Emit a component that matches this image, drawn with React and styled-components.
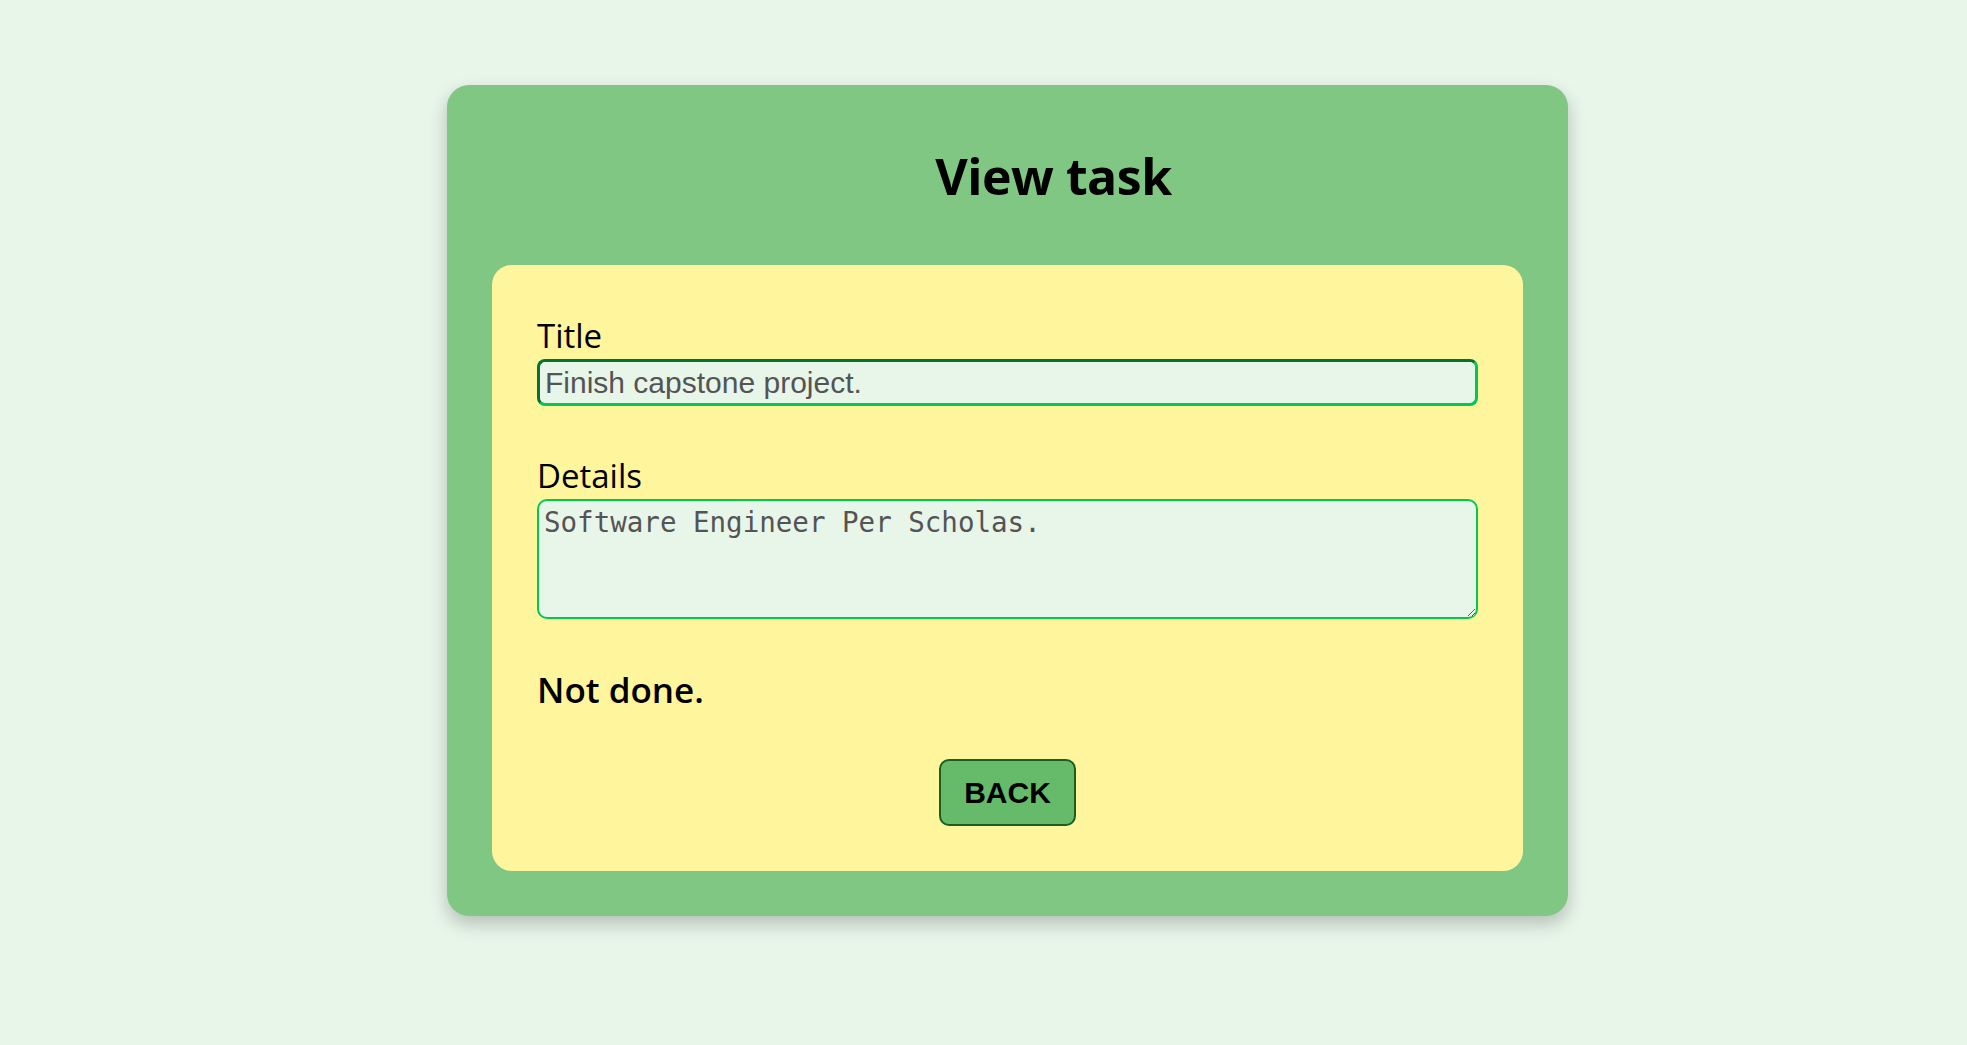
import styled, { createGlobalStyle } from 'styled-components';

const GlobalStyle = createGlobalStyle`
  * {
    box-sizing: border-box;
  }

  body {
    margin: 0;
    background-color: #e8f5e9;
    font-family: 'Open Sans', 'Noto Sans', sans-serif;
    color: #000;
  }
`;

const Page = styled.div`
  min-height: 100vh;
  display: flex;
  justify-content: center;
  align-items: flex-start;
  padding: 85px 0 0 48px;
`;

const Card = styled.div`
  width: 1121px;
  padding: 45px;
  background-color: #81c784;
  border-radius: 22px;
  box-shadow: 0 8px 18px rgba(0, 0, 0, 0.22);
`;

const Heading = styled.h1`
  margin: 14px 0 57px;
  padding-left: 92px;
  text-align: center;
  font-size: 50px;
  line-height: 64px;
  font-weight: 700;
  letter-spacing: -0.5px;
`;

const Panel = styled.div`
  background-color: #fff59d;
  border-radius: 20px;
  padding: 45px;
  display: flex;
  flex-direction: column;
`;

const Label = styled.label`
  display: block;
  margin-top: ${(p) => p.$top || 0}px;
  margin-bottom: 2px;
  font-size: 33px;
  line-height: 42px;
  font-weight: 400;
`;

const TitleInput = styled.input`
  display: block;
  width: 100%;
  height: 47px;
  padding: 0 5px;
  border: 3px solid #00c853;
  border-top-color: #04732f;
  border-left-color: #04732f;
  border-radius: 8px;
  background-color: #e8f5e9;
  color: #545454;
  font-family: 'Liberation Sans', Arial, sans-serif;
  font-size: 30px;
  outline: none;
`;

const DetailsArea = styled.textarea`
  display: block;
  width: 100%;
  height: 120px;
  padding: 5px;
  border: 2px solid #00c853;
  border-radius: 10px;
  background-color: #e8f5e9;
  color: #545454;
  font-family: 'DejaVu Sans Mono', monospace;
  font-size: 27.5px;
  line-height: 1.2;
  outline: none;
`;

const Status = styled.p`
  margin: 49px 0 0;
  font-size: 35px;
  line-height: 43px;
  font-weight: 600;
`;

const Actions = styled.div`
  display: flex;
  justify-content: center;
  margin-top: 48px;
`;

const BackButton = styled.button`
  height: 67px;
  padding: 0 23px;
  border: 2px solid #1b5e20;
  border-radius: 10px;
  background-color: #66bb6a;
  color: #000;
  font-family: 'Liberation Sans', Arial, sans-serif;
  font-size: 30px;
  font-weight: 700;
  cursor: pointer;
`;

const App = () => {
  const task = {
    title: 'Finish capstone project.',
    details: 'Software Engineer Per Scholas.',
    done: false,
  };

  return (
    <>
      <GlobalStyle />
      <Page>
        <Card>
          <Heading>View task</Heading>
          <Panel>
            <Label htmlFor="title" $top={5}>
              Title
            </Label>
            <TitleInput id="title" value={task.title} readOnly />
            <Label htmlFor="details" $top={49}>
              Details
            </Label>
            <DetailsArea id="details" value={task.details} readOnly />
            <Status>{task.done ? 'Done.' : 'Not done.'}</Status>
            <Actions>
              <BackButton>BACK</BackButton>
            </Actions>
          </Panel>
        </Card>
      </Page>
    </>
  );
};

export default App;
